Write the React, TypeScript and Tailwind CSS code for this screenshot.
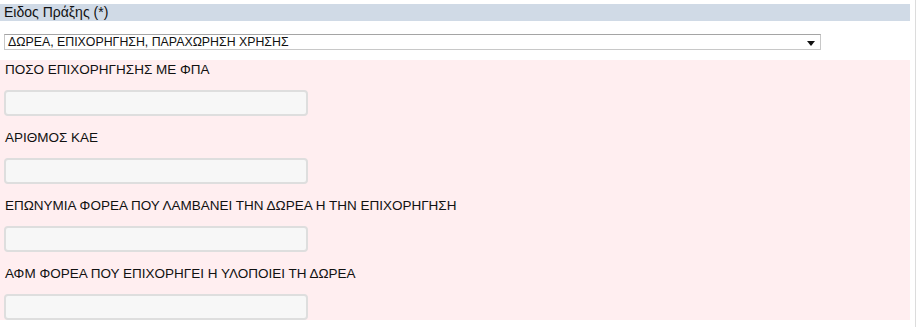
const fields = [
  "ΠΟΣΟ ΕΠΙΧΟΡΗΓΗΣΗΣ ΜΕ ΦΠΑ",
  "ΑΡΙΘΜΟΣ ΚΑΕ",
  "ΕΠΩΝΥΜΙΑ ΦΟΡΕΑ ΠΟΥ ΛΑΜΒΑΝΕΙ ΤΗΝ ΔΩΡΕΑ Η ΤΗΝ ΕΠΙΧΟΡΗΓΗΣΗ",
  "ΑΦΜ ΦΟΡΕΑ ΠΟΥ ΕΠΙΧΟΡΗΓΕΙ Η ΥΛΟΠΟΙΕΙ ΤΗ ΔΩΡΕΑ",
];

export default function App() {
  return (
    <div
      className="flex w-[917px] h-[327px] bg-white text-[#111]"
      style={{ fontFamily: '"Liberation Sans", Arial, sans-serif' }}
    >
      <div className="w-[910px] pt-[4px]">
        {/* Section header */}
        <div className="h-[17px] bg-[#d0dae6] pl-[4px] text-[14px] leading-[17px]">
          Ειδος Πράξης (*)
        </div>

        {/* Select */}
        <div className="mt-[13px] ml-[4px] w-[817px] h-[16px] flex items-center justify-between border border-[#c8c8c8] border-t-[#a5a5a5] bg-white pl-[3px] pr-[5px]">
          <span className="text-[12.35px] leading-[14px]">
            ΔΩΡΕΑ, ΕΠΙΧΟΡΗΓΗΣΗ, ΠΑΡΑΧΩΡΗΣΗ ΧΡΗΣΗΣ
          </span>
          <svg width="8" height="5" viewBox="0 0 8 5" className="mt-[2px]">
            <path d="M0 0H8L4 5Z" fill="#111" />
          </svg>
        </div>

        {/* Fields */}
        <div className="mt-[10px] h-[260px] bg-[#ffeef0] pl-[4px]">
          {fields.map((label, i) => (
            <div key={label} className={i === 0 ? "" : "mt-[12px]"}>
              <div className="pl-px text-[13.5px] leading-[20px]">{label}</div>
              <div className="mt-[10px] w-[304px] h-[26px] rounded-[4px] border-2 border-[#dedede] bg-[#f7f7f7]" />
            </div>
          ))}
        </div>
      </div>
      <div className="ml-[5px] w-px bg-[#dcdcdc]" />
    </div>
  );
}
